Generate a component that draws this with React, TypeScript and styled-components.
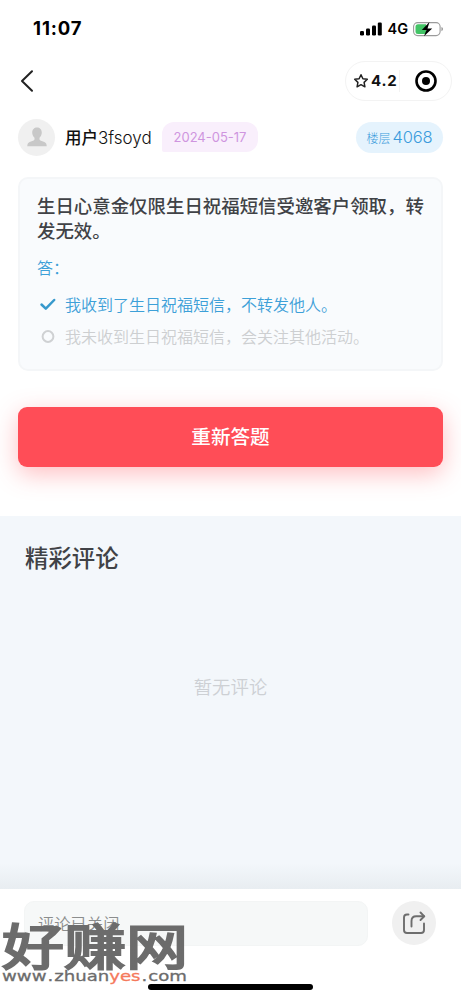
import React from 'react';
import styled, { createGlobalStyle } from 'styled-components';

const cjk = '"Noto Sans CJK SC", sans-serif';

const GlobalStyle = createGlobalStyle`
  * { box-sizing: border-box; }
  body { margin: 0; background: #fff; font-family: Inter, ${cjk}; }
`;

const Screen = styled.div`
  position: relative;
  width: 461px;
  height: 1000px;
  overflow: hidden;
  display: flex;
  flex-direction: column;
  background: #fff;
`;

const StatusBar = styled.header`
  height: 56px;
  flex: none;
  display: flex;
  align-items: center;
  justify-content: space-between;
  padding: 1px 17px 0 33px;
`;

const Clock = styled.span`
  font: 700 18.5px/24px Inter, sans-serif;
  letter-spacing: 0.9px;
  margin-top: -1px;
  color: #000;
`;

const StatusIcons = styled.div`
  display: flex;
  align-items: center;
`;

const Network = styled.span`
  font: 600 14.5px/20px Inter, sans-serif;
  margin: 1px 5px 0 5px;
  color: #000;
`;

const NavBar = styled.nav`
  height: 50px;
  flex: none;
  display: flex;
  align-items: center;
  justify-content: space-between;
  padding: 0 9px 0 20px;
`;

const Capsule = styled.div`
  width: 107px;
  height: 40px;
  border: 1px solid #f3f3f3;
  border-radius: 20px;
  display: flex;
  align-items: center;
  padding-left: 7px;
`;

const Score = styled.span`
  font: 700 15px/20px Inter, sans-serif;
  letter-spacing: 0.8px;
  margin-left: 2px;
  width: 27px;
  color: #111;
`;

const CapsuleDivider = styled.i`
  width: 1px;
  height: 22px;
  background: #f3f3f3;
  margin: 0 15px 0 1px;
`;

const UserRow = styled.section`
  height: 38px;
  margin-top: 12px;
  flex: none;
  display: flex;
  align-items: center;
  padding: 0 18px;
`;

const Avatar = styled.div`
  width: 37px;
  height: 37px;
  border-radius: 50%;
  background: #f0f0f0;
  display: flex;
  align-items: center;
  justify-content: center;
`;

const UserName = styled.div`
  font: 500 16.5px/24px "Noto Sans CJK SC", sans-serif;
  margin: 1px 0 0 10px;
  width: 97px;
  white-space: nowrap;
  color: #111;
  span {
    font-family: Inter, sans-serif;
    font-weight: 300;
    font-size: 17px;
  }
`;

const DateTag = styled.span`
  width: 96px;
  height: 30px;
  border-radius: 12px 12px 12px 2px;
  background: #f9effc;
  color: #cf95df;
  font: 400 13px/30px Inter, sans-serif;
  text-align: center;
  white-space: nowrap;
`;

const FloorTag = styled.span`
  width: 87px;
  height: 31px;
  margin-left: auto;
  border-radius: 16px;
  background: #e5f3fd;
  color: #3a9bdc;
  display: flex;
  align-items: baseline;
  justify-content: center;
  font: 300 12px/31px "Noto Sans CJK SC", sans-serif;
  b { font: 300 16.5px/31px Inter, sans-serif; letter-spacing: -0.2px; margin-left: 2px; }
`;

const Card = styled.section`
  width: 425px;
  height: 194px;
  margin: 21px 0 0 18px;
  flex: none;
  border: 2px solid #f4f6f8;
  border-radius: 10px;
  background: #f9fbfd;
  padding: 14px 15px 0 17px;
`;

const Question = styled.h2`
  margin: 0;
  font: 500 18.43px/25px ${cjk};
  color: #404246;
  white-space: nowrap;
`;

const AnswerLabel = styled.div`
  margin-top: 12px;
  font: 350 16px/24px ${cjk};
  color: #3da0d8;
`;

const Option = styled.div<{ $chosen?: boolean }>`
  display: flex;
  align-items: center;
  height: 32px;
  font: 350 16px/32px ${cjk};
  color: ${(p) => (p.$chosen ? '#3da0d8' : '#cdcfd1')};
  svg { margin: 0 8px 0 1px; flex: none; }
`;

const Options = styled.div`
  margin-top: 9px;
`;

const RetryButton = styled.button`
  width: 425px;
  height: 60px;
  margin: 36px 0 0 18px;
  flex: none;
  border: 0;
  border-radius: 9px;
  background: #ff4d57;
  box-shadow: 0 7px 24px rgba(255, 77, 87, 0.36);
  color: #fff;
  font: 500 19.6px/56px ${cjk};
  padding: 0 0 2px;
`;

const Comments = styled.section`
  flex: none;
  height: 373px;
  margin-top: 49px;
  padding: 24px 25px 0;
  background: linear-gradient(#f3f7fb 0, #f3f7fb 347px, #e8edf1 373px);
`;

const CommentsTitle = styled.h3`
  margin: 0;
  font: 500 23.4px/34px ${cjk};
  color: #404246;
`;

const Empty = styled.p`
  margin: 98px 0 0;
  text-align: center;
  font: 350 18.4px/28px ${cjk};
  color: #cdd0d4;
`;

const BottomBar = styled.footer`
  flex: 1;
  display: flex;
  align-items: flex-start;
  padding: 12px 24px 0;
  background: #fff;
`;

const CommentField = styled.div`
  width: 344px;
  height: 45px;
  border-radius: 10px;
  border: 1px solid #f3f5f5;
  background: #f6f8f8;
  padding-left: 13px;
  font: 350 16.3px/43px ${cjk};
  color: #8b8d8d;
`;

const ShareButton = styled.div`
  width: 44px;
  height: 44px;
  margin-left: 24px;
  border-radius: 50%;
  background: #f0f0f0;
  display: flex;
  align-items: center;
  justify-content: center;
`;

const HomeIndicator = styled.div`
  position: absolute;
  left: 148px;
  top: 984px;
  width: 165px;
  height: 6px;
  border-radius: 3px;
  background: #000;
`;

const Watermark = styled.div`
  position: absolute;
  left: 2px;
  top: 920px;
  color: #6c6c6c;
  white-space: nowrap;
`;

const WatermarkName = styled.div`
  font: 400 62px/46px ${cjk};
  height: 48px;
  -webkit-text-stroke: 2.8px currentColor;
  transform: scaleY(0.79);
  transform-origin: 0 50%;
`;

const WatermarkUrl = styled.div`
  display: flex;
  width: 148px;
  justify-content: space-between;
  font: 400 14.5px/16px "DejaVu Sans", sans-serif;
  -webkit-text-stroke: 0.3px currentColor;
  transform: scaleX(1.25);
  transform-origin: 0 0;
  em { font-style: normal; color: #f5795b; }
`;

export default function App() {
  return (
    <Screen>
      <GlobalStyle />
      <StatusBar>
        <Clock>11:07</Clock>
        <StatusIcons>
          <svg width="22" height="14" viewBox="0 0 22 14" fill="#000">
            <rect x="0" y="9" width="4" height="4.5" rx="1.2" />
            <rect x="6" y="6.5" width="4" height="7" rx="1.2" />
            <rect x="12" y="3.5" width="4" height="10" rx="1.2" />
            <rect x="17.8" y="0.5" width="4" height="13" rx="1.2" />
          </svg>
          <Network>4G</Network>
          <svg width="31" height="16" viewBox="0 0 31 16">
            <rect x="0.6" y="1.6" width="26.5" height="13" rx="4" fill="#fff" stroke="#9b9b9b" strokeWidth="1.1" />
            <path d="M5 3.2h8v9.8H5a2.5 2.5 0 0 1-2.5-2.5V5.7A2.5 2.5 0 0 1 5 3.2z" fill="#43c466" />
            <path d="M28.5 6v4.2q1.4-.7 1.4-2.1T28.5 6z" fill="#888" />
            <path d="M16.5 1 8.8 9h4.6L11 15.3 19.2 7.4h-4.7z" fill="#000" />
          </svg>
        </StatusIcons>
      </StatusBar>
      <NavBar>
        <svg width="14" height="24" viewBox="0 0 14 24" fill="none" stroke="#222" strokeWidth="2" strokeLinecap="round" strokeLinejoin="round">
          <path d="M12 2.2 2 12l10 9.8" />
        </svg>
        <Capsule>
          <svg width="16" height="16" viewBox="0 0 16 16" fill="none" stroke="#222" strokeWidth="1.5" strokeLinejoin="round">
            <path d="m8 1.7 1.9 4 4.4.6-3.2 3.1.8 4.4L8 11.7l-3.9 2.1.8-4.4-3.2-3.1 4.4-.6z" />
          </svg>
          <Score>4.2</Score>
          <CapsuleDivider />
          <svg width="22" height="22" viewBox="0 0 22 22">
            <circle cx="11" cy="11" r="9.5" fill="none" stroke="#000" strokeWidth="2.6" />
            <circle cx="11" cy="11" r="4" fill="#000" />
          </svg>
        </Capsule>
      </NavBar>
      <UserRow>
        <Avatar>
          <svg width="20" height="20" viewBox="0 0 20 20" fill="#c8c8c8">
            <path d="M10 .5c2.8 0 4.8 2 4.8 5 0 2.2-1 4.2-2.3 5.2v1.2c0 1 .5 1.4 1.5 1.8l3.4 1.3c1.6.7 2.3 1.9 2.3 4.2H.3c0-2.3.7-3.5 2.3-4.2L6 13.7c1-.4 1.5-.8 1.5-1.8v-1.2c-1.3-1-2.3-3-2.3-5.2 0-3 2-5 4.8-5z" />
          </svg>
        </Avatar>
        <UserName>用户<span>3fsoyd</span></UserName>
        <DateTag>2024-05-17</DateTag>
        <FloorTag>楼层<b>4068</b></FloorTag>
      </UserRow>
      <Card>
        <Question>生日心意金仅限生日祝福短信受邀客户领取，转<br />发无效。</Question>
        <AnswerLabel>答：</AnswerLabel>
        <Options>
          <Option $chosen>
            <svg width="19" height="18" viewBox="0 0 19 18" fill="none" stroke="#3799cc" strokeWidth="2.5" strokeLinecap="round" strokeLinejoin="round">
              <path d="m3.5 9.5 4.3 4.2 8.4-8.7" />
            </svg>
            我收到了生日祝福短信，不转发他人。
          </Option>
          <Option>
            <svg width="19" height="18" viewBox="0 0 19 18" fill="none" stroke="#cfd1d3" strokeWidth="2">
              <circle cx="10" cy="9.5" r="5.4" />
            </svg>
            我未收到生日祝福短信，会关注其他活动。
          </Option>
        </Options>
      </Card>
      <RetryButton>重新答题</RetryButton>
      <Comments>
        <CommentsTitle>精彩评论</CommentsTitle>
        <Empty>暂无评论</Empty>
      </Comments>
      <BottomBar>
        <CommentField>评论已关闭</CommentField>
        <ShareButton>
          <svg width="24" height="24" viewBox="0 0 24 24" fill="none" stroke="#6d6d6d" strokeWidth="1.9" strokeLinecap="round" strokeLinejoin="round">
            <path d="M6.5 3.5H5A3 3 0 0 0 2 6.5V19a3 3 0 0 0 3 3h14a3 3 0 0 0 3-3v-6.5" />
            <path d="M9.5 15.500V10c0-3 1.700-4.700 4.700-4.700H22" />
            <path d="m18.500 1.500 3.800 3.800-3.800 3.700" />
          </svg>
        </ShareButton>
      </BottomBar>
      <HomeIndicator />
      <Watermark>
        <WatermarkName>好赚网</WatermarkName>
        <WatermarkUrl>
          <span>www</span>
          <span>.</span>
          <span>zhuan<em>yes</em></span>
          <span>.</span>
          <span>com</span>
        </WatermarkUrl>
      </Watermark>
    </Screen>
  );
}
